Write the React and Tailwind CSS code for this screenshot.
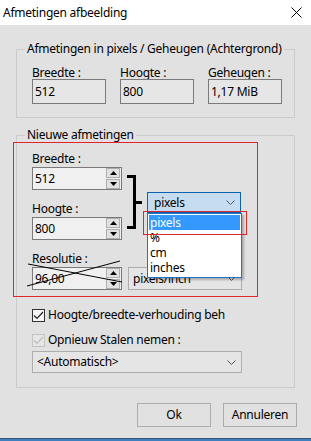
import { Fragment } from 'react'

const Chevron = () => (
  <svg width="9" height="5" viewBox="0 0 9 5" className="shrink-0">
    <path d="M0.5 0.5 L4.5 4.5 L8.5 0.5" fill="none" stroke="#555" strokeWidth="1" />
  </svg>
)

function SpinBtn({ up }) {
  return (
    <div className="w-[14px] h-[10px] border border-[#adadad] bg-[#e1e1e1] flex items-center justify-center">
      <svg width="7" height="4" viewBox="0 0 7 4">
        <path d={up ? 'M0 4 L3.5 0 L7 4 Z' : 'M0 0 L3.5 4 L7 0 Z'} fill="#000" />
      </svg>
    </div>
  )
}

function SpinBox({ value }) {
  return (
    <div className="w-[90px] h-[23px] border border-[#7a7a7a] bg-[#f0f0f0] flex items-center justify-between pl-[2px] pr-[1px]">
      <span>{value}</span>
      <div className="flex flex-col gap-[1px]">
        <SpinBtn up />
        <SpinBtn />
      </div>
    </div>
  )
}

function ReadBox({ label, value }) {
  return (
    <div className="flex flex-col w-[74px]">
      <div className="leading-[13px] h-[13px]">{label}</div>
      <div className="h-[25px] border border-[#7a7a7a] bg-[#e6e6e6] flex items-center pl-[2px]">{value}</div>
    </div>
  )
}

function Check({ disabled }) {
  return (
    <div className={`w-[13px] h-[13px] border flex items-center justify-center ${disabled ? 'border-[#c4c4c4] bg-[#e6e6e6]' : 'border-[#333] bg-[#f5f5f5]'}`}>
      <svg width="11" height="9" viewBox="0 0 11 9">
        <path d="M1 4.5 L4 7.5 L10 1" fill="none" stroke={disabled ? '#bdbdbd' : '#222'} strokeWidth="1.2" />
      </svg>
    </div>
  )
}

export default function App() {
  return (
    <div className="relative w-[311px] h-[441px] bg-[#e1e1e1] flex flex-col font-['Noto_Sans',sans-serif] text-[12px] tracking-[-0.25px] text-black overflow-hidden">
      <div className="h-[25px] bg-white flex items-center justify-between pl-[3px] pr-[9px]">
        <span>Afmetingen afbeelding</span>
        <svg width="11" height="11" viewBox="0 0 11 11">
          <path d="M0.5 0.5 L10.5 10.5 M10.5 0.5 L0.5 10.5" stroke="#000" strokeWidth="1" />
        </svg>
      </div>

      <fieldset className="mx-[16px] mt-[16px] border border-[#cbcbcb] px-0 pb-[13px]">
        <legend className="ml-[8px] px-[2px] leading-[16px] whitespace-nowrap">Afmetingen in pixels / Geheugen (Achtergrond)</legend>
        <div className="flex gap-[14px] pl-[15px] pt-[9px]">
          <ReadBox label="Breedte :" value="512" />
          <ReadBox label="Hoogte :" value="800" />
          <ReadBox label="Geheugen :" value="1,17 MiB" />
        </div>
      </fieldset>

      <fieldset className="mx-[16px] mt-[9px] border border-[#cbcbcb] px-0 pb-[14px]">
        <legend className="ml-[8px] px-[2px] leading-[16px]">Nieuwe afmetingen</legend>
        <div className="flex flex-col pl-[15px] pt-[9px]">
          <div className="flex items-start">
            <div className="flex flex-col w-[90px]">
              <div className="leading-[14px]">Breedte :</div>
              <div className="mt-[1px]"><SpinBox value="512" /></div>
              <div className="leading-[14px] mt-[12px]">Hoogte :</div>
              <div className="mt-[1px]"><SpinBox value="800" /></div>
            </div>
            <div className="ml-[5px] mt-[23px] flex items-center">
              <div className="w-[9px] h-[54px] border-y-[3px] border-r-[3px] border-black" />
              <div className="w-[6px] h-[3px] bg-black" />
            </div>
            <div className="relative ml-[5px] mt-[40px]">
              <div className="w-[94px] h-[21px] border border-[#0f62ad] bg-[#c6dcf0] flex items-center justify-between pl-[6px] pr-[5px]">
                <span>pixels</span>
                <Chevron />
              </div>
              <div className="absolute left-0 top-full w-[95px] h-[65px] border border-[#1f74c8] bg-white p-[1px] shadow-[2px_2px_2px_rgba(0,0,0,0.25)] z-10">
                {['pixels', '%', 'cm', 'inches'].map((t, i) => (
                  <div key={t} className={`h-[15px] leading-[15px] pl-[1px] ${i === 0 ? 'bg-[#3399ff] text-white' : ''}`}>{t}</div>
                ))}
              </div>
              <div className="absolute left-[-4px] top-[19px] w-[104px] h-[24px] border border-[#e0252f] z-20" />
            </div>
          </div>

          <div className="leading-[14px] mt-[12px]">Resolutie :</div>
          <div className="mt-[1px] flex">
            <SpinBox value="96,00" />
            <div className="ml-[6px] w-[114px] h-[23px] border border-[#adadad] bg-[#e5e5e5] flex items-center justify-between pl-[4px] pr-[5px]">
              <span>pixels/inch</span>
              <Chevron />
            </div>
          </div>

          <div className="mt-[17px] h-[16px] flex items-center gap-[3px]">
            <Check />
            <div className="w-[177px] overflow-hidden whitespace-nowrap">Hoogte/breedte-verhouding behouden</div>
          </div>
          <div className="mt-[9px] h-[16px] flex items-center gap-[3px]">
            <Check disabled />
            <span>Opnieuw Stalen nemen :</span>
          </div>
          <div className="mt-[3px] w-[210px] h-[22px] border border-[#adadad] bg-[#e5e5e5] flex items-center justify-between pl-[4px] pr-[5px]">
            <span>&lt;Automatisch&gt;</span>
            <Chevron />
          </div>
        </div>
      </fieldset>

      <div className="flex justify-end gap-[12px] pr-[14px] mt-[15px]">
        <button className="w-[74px] h-[24px] border border-[#adadad] bg-[#e1e1e1]">Ok</button>
        <button className="w-[74px] h-[24px] border border-[#adadad] bg-[#e1e1e1]">Annuleren</button>
      </div>

      <div className="mt-auto h-[1px] bg-[#3a5670]" />
      <div className="h-[2px] bg-[#3f7fbf]" />

      <div className="absolute left-[13px] top-[142px] w-[245px] h-[155px] border border-[#e0252f] pointer-events-none" />
      <svg className="absolute left-0 top-0 pointer-events-none" width="311" height="441">
        <path d="M28 264 L122 282 M27 286 L120 261" stroke="#000" strokeWidth="1" fill="none" />
      </svg>
    </div>
  )
}
